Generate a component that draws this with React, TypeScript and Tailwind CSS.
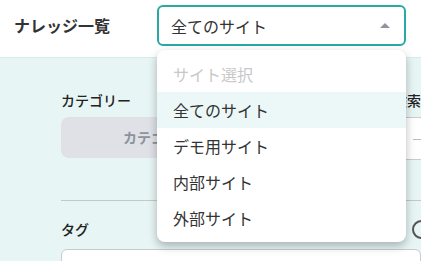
const siteOptions = ["全てのサイト", "デモ用サイト", "内部サイト", "外部サイト"];

export default function App() {
  return (
    <div className="relative flex h-[261px] w-[421px] flex-col overflow-hidden bg-white font-['Noto_Sans_CJK_JP',sans-serif] text-[#333]">
      {/* header */}
      <header className="flex h-[57px] shrink-0 items-start pt-[5px]">
        <h1 className="w-[157px] pl-[14px] text-[16px] font-bold leading-[41px]">ナレッジ一覧</h1>
        <div className="flex h-[41px] w-[249px] items-center justify-between rounded-[6px] border-2 border-[#2aa8a4] pl-[12px] pr-[14px]">
          <span className="text-[16px] leading-none">全てのサイト</span>
          <span className="h-0 w-0 border-x-[5px] border-b-[5px] border-x-transparent border-b-[#8e959c]" />
        </div>
      </header>

      {/* search panel */}
      <main className="flex-1 border-t border-[#d6ecec] bg-[#e7f5f5] pl-[61px] pt-[32px]">
        <div className="flex gap-[26px]">
          <div className="w-[236px]">
            <p className="text-[14px] font-medium leading-[20px] text-[#222]">カテゴリー</p>
            <button className="mt-[7px] flex h-[41px] w-full items-center justify-center rounded-[8px] bg-[#dfe1e6] text-[14px] font-bold text-[#8c939c]">
              カテゴリーを選択
            </button>
          </div>
          <div className="flex-1">
            <p className="whitespace-nowrap text-[14px] font-medium leading-[20px] text-[#222]">キーワード検索</p>
            <div className="mt-[7px] flex h-[43px] flex-col border-y border-[#c9cccc] bg-white">
              <div className="h-[21px]" />
              <div className="ml-[90px] border-t border-[#b8bcbc]" />
            </div>
          </div>
        </div>

        <div className="mt-[40px] border-t border-[#c6c8c8]" />

        <div className="mt-[18px] flex items-center justify-between">
          <p className="text-[14px] font-medium leading-[20px] text-[#222]">タグ</p>
          <span className="mr-[-10px] h-[19px] w-[19px] rounded-full border-2 border-[#555]" />
        </div>
        <div className="mt-[10px] h-[20px] rounded-t-[6px] border border-[#c9cccc] bg-white" />
      </main>

      {/* site select menu */}
      <ul className="absolute left-[157px] top-[50px] w-[249px] rounded-[8px] bg-white py-[6px] shadow-[0_4px_10px_rgba(0,0,0,0.28)]">
        <li className="flex h-[36px] items-center pl-[16px] text-[16px] text-[#c8c8c8]">サイト選択</li>
        {siteOptions.map((opt, i) => (
          <li
            key={opt}
            className={`flex h-[36px] items-center pl-[16px] text-[16px] text-[#333] ${i === 0 ? "bg-[#ecf8f8]" : ""}`}
          >
            {opt}
          </li>
        ))}
      </ul>
    </div>
  );
}
